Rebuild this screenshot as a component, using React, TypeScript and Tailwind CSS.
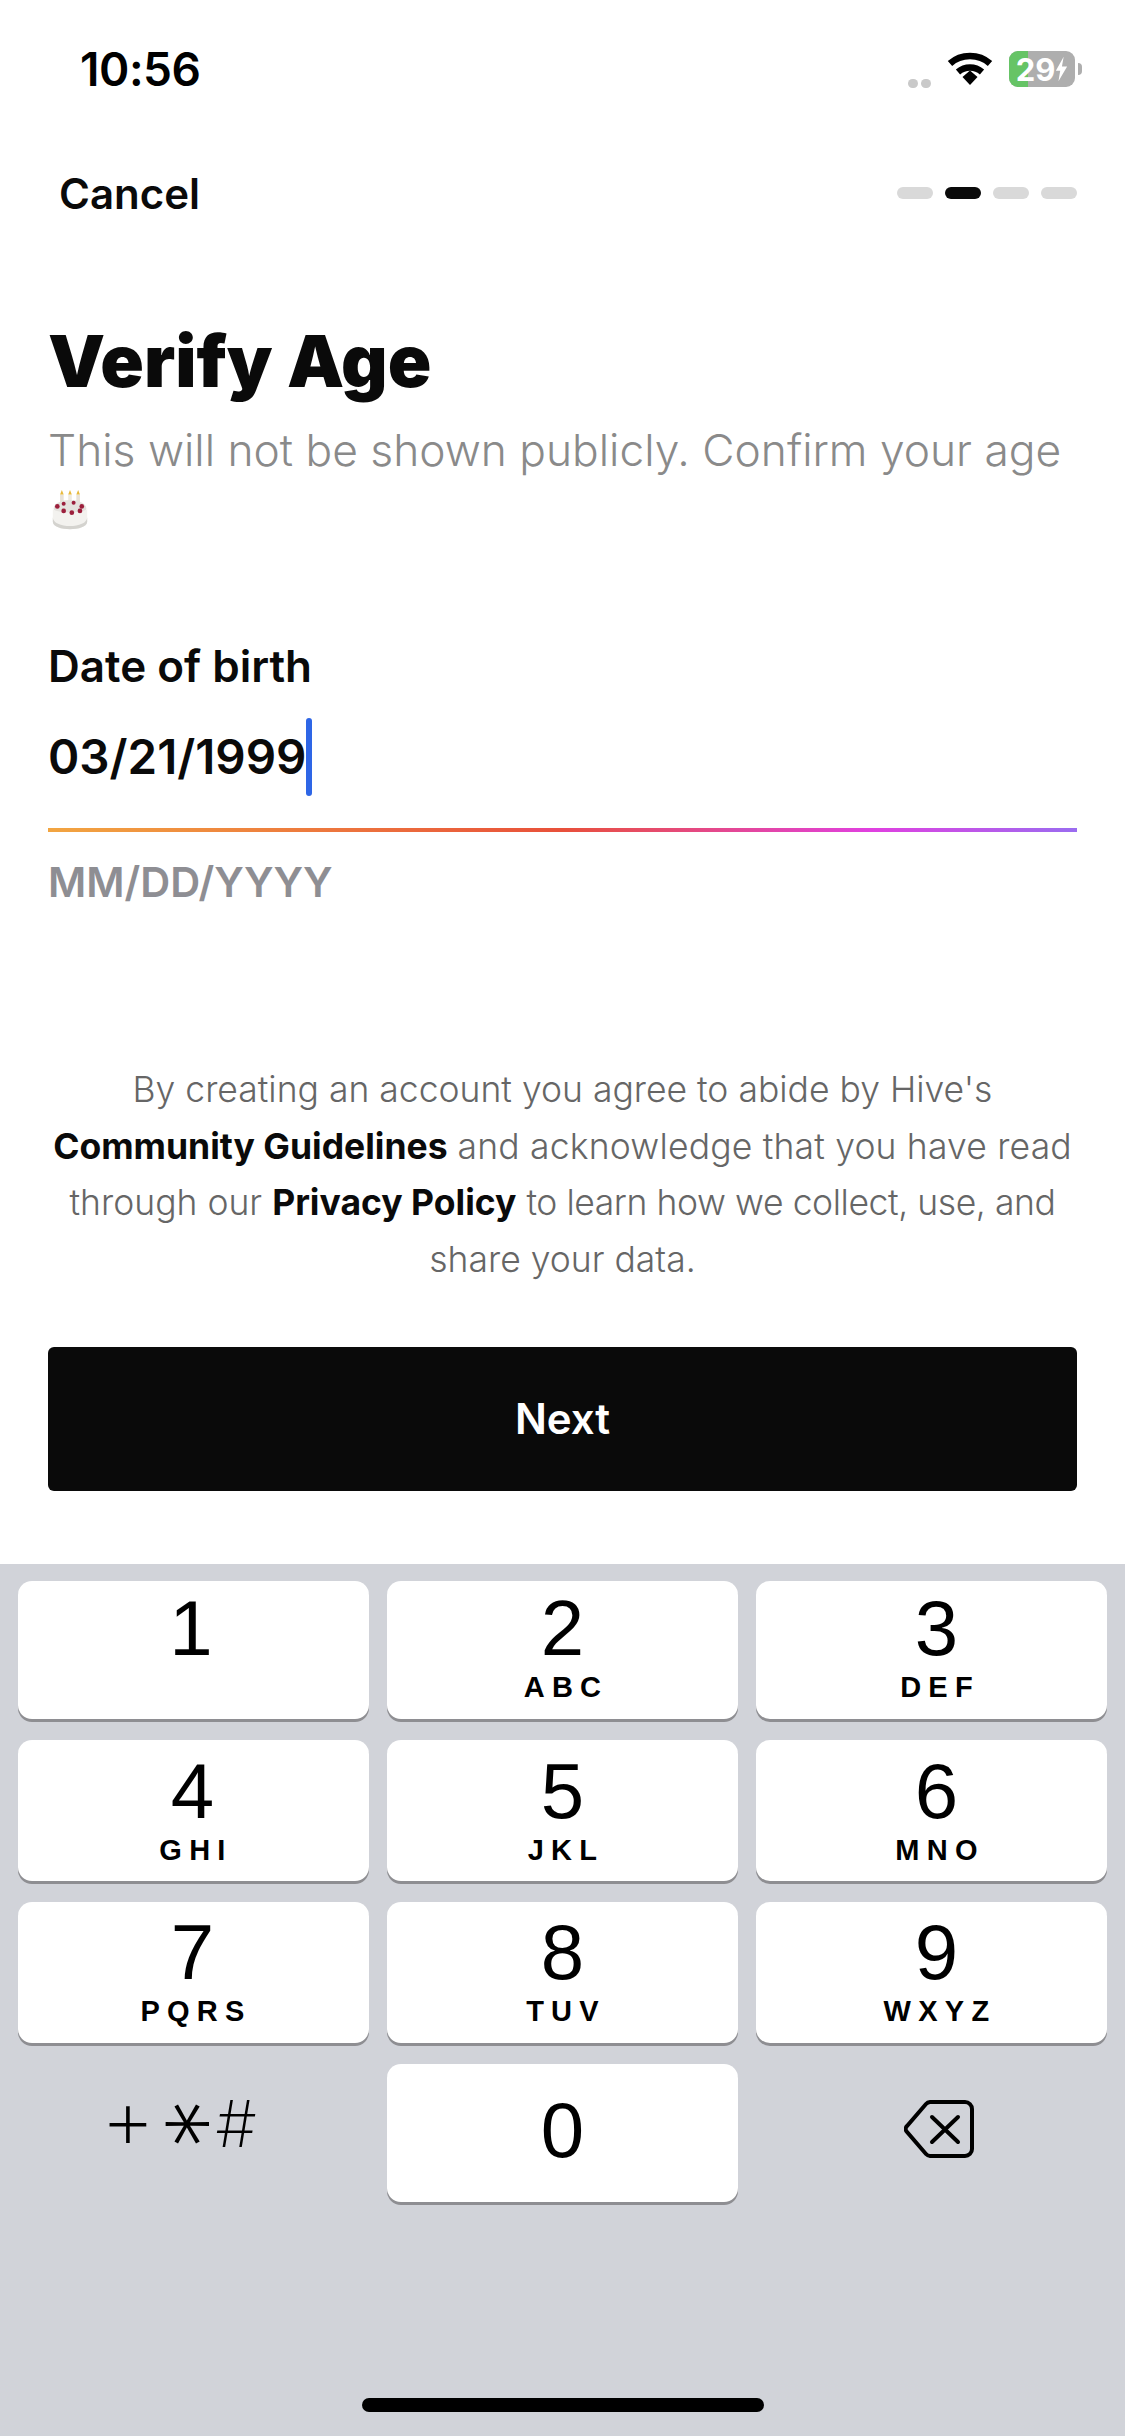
const rows = [
  {
    pad: 'pt-[7px]',
    keys: [
      { digit: '1', letters: '', shift: 'pr-[5px]' },
      { digit: '2', letters: 'ABC', shift: '' },
      { digit: '3', letters: 'DEF', shift: 'pl-[10px]' },
    ],
  },
  {
    pad: 'pt-[11px]',
    keys: [
      { digit: '4', letters: 'GHI', shift: 'pr-[2px]' },
      { digit: '5', letters: 'JKL', shift: '' },
      { digit: '6', letters: 'MNO', shift: 'pl-[10px]' },
    ],
  },
  {
    pad: 'pt-[10px]',
    keys: [
      { digit: '7', letters: 'PQRS', shift: 'pr-[2px]' },
      { digit: '8', letters: 'TUV', shift: '' },
      { digit: '9', letters: 'WXYZ', shift: 'pl-[10px]' },
    ],
  },
];

function Key({ digit, letters, className }: { digit: string; letters: string; className: string }) {
  return (
    <div className={`flex flex-col items-center rounded-[14px] bg-white shadow-[0_3px_0_#8e8e92] ${className}`}>
      <span className="text-[78px] leading-[80px] text-black">{digit}</span>
      <span className="mt-[4px] -mr-[7px] text-[29px] leading-[30px] font-bold tracking-[0.25em] text-black">
        {letters}
      </span>
    </div>
  );
}

function Wifi() {
  return (
    <svg width="46" height="34" viewBox="0 0 46 34" fill="none">
      <path d="M3 11.5C14 1.5 32 1.5 43 11.5" stroke="#000" strokeWidth="6.5" />
      <path d="M11 20C18 14 28 14 35 20" stroke="#000" strokeWidth="6.5" />
      <path d="M15.5 25L23 18.5 30.5 25 23 33Z" fill="#000" />
    </svg>
  );
}

function Cake() {
  return (
    <svg width="38" height="40" viewBox="0 0 42 44">
      <rect x="10" y="5" width="4" height="16" fill="#e8e2d8" />
      <rect x="19" y="5" width="4" height="18" fill="#efeae0" />
      <rect x="28" y="5" width="4" height="16" fill="#e8e2d8" />
      <path d="M12 0l2 5h-4zM21 0l2 5h-4zM30 0l2 5h-4z" fill="#e8b93c" />
      <ellipse cx="21" cy="20" rx="18" ry="9" fill="#e4e2de" />
      <path d="M2 20c0 6 38 6 38 0v15c0 11-38 11-38 0z" fill="#f3f2ef" />
      <path d="M2 30c0 13 38 13 38 0v5c0 11-38 11-38 0z" fill="#d4d3cf" />
      <g fill="#9c1f3c">
        <circle cx="7" cy="18" r="2.6" />
        <circle cx="14" cy="15" r="2.2" />
        <circle cx="25" cy="14" r="2.2" />
        <circle cx="34" cy="18" r="2.6" />
        <circle cx="14" cy="23" r="2.6" />
        <circle cx="23" cy="25" r="2.6" />
        <circle cx="32" cy="23" r="2.6" />
      </g>
    </svg>
  );
}

function Backspace() {
  return (
    <svg width="70" height="58" viewBox="0 0 70 58" fill="none" stroke="#000" strokeWidth="4" strokeLinecap="round">
      <path d="M26 2H61a7 7 0 0 1 7 7V49a7 7 0 0 1-7 7H26a6 6 0 0 1-4-2L3 32a4 4 0 0 1 0-6L22 4a6 6 0 0 1 4-2Z" />
      <path d="M28 17L54 42M54 17L28 42" />
    </svg>
  );
}

export default function App() {
  return (
    <div className="flex h-[2436px] w-[1125px] flex-col overflow-hidden bg-white font-['Inter',sans-serif] text-[#0a0a0a]">
      <div className="flex h-[138px] items-center justify-between pr-[43px] pl-[80px]">
        <span className="text-[46px] font-semibold tracking-[-0.01em] text-black">10:56</span>
        <div className="flex items-center">
          <div className="mt-[28px] mr-[16px] flex gap-[3px]">
            <span className="h-[9px] w-[10px] rounded-full bg-[#c9c9c9]" />
            <span className="h-[9px] w-[10px] rounded-full bg-[#c9c9c9]" />
          </div>
          <Wifi />
          <div className="relative ml-[16px] flex h-[36px] w-[66px] items-center justify-center rounded-[9px] bg-[#aeaeae]">
            <span className="absolute top-0 left-0 h-full w-[19px] rounded-l-[9px] bg-[#66c466]" />
            <span className="relative text-[31px] leading-none font-bold text-white">29</span>
            <svg className="relative" width="13" height="30" viewBox="0 0 15 30">
              <path d="M10 1L1 17h5l-2 12 10-17H8z" fill="#fff" />
            </svg>
          </div>
          <span className="ml-[3px] h-[12px] w-[4px] rounded-r-full bg-[#aeaeae]" />
        </div>
      </div>

      <div className="flex h-[110px] items-center justify-between pr-[48px] pl-[59px]">
        <span className="text-[42px] font-semibold">Cancel</span>
        <div className="flex gap-[12px]">
          <span className="h-[12px] w-[36px] rounded-full bg-[#d9d9d9]" />
          <span className="h-[12px] w-[36px] rounded-full bg-[#0a0a0a]" />
          <span className="h-[12px] w-[36px] rounded-full bg-[#d9d9d9]" />
          <span className="h-[12px] w-[36px] rounded-full bg-[#d9d9d9]" />
        </div>
      </div>

      <div className="px-[48px]">
        <h1 className="mt-[71px] text-[72px] leading-[84px] font-black">Verify Age</h1>
        <p className="mt-[17px] text-[44.3px] leading-[60px] font-light whitespace-nowrap text-[#8a8a8a]">
          This will not be shown publicly. Confirm your age
        </p>
        <div className="flex h-[60px] items-center pl-[3px]">
          <Cake />
        </div>

        <div className="mt-[101px] text-[44px] leading-[50px] font-semibold">Date of birth</div>
        <div className="mt-[27px] flex h-[78px] items-center">
          <span className="text-[47.5px] font-semibold">03/21/1999</span>
          <span className="h-[78px] w-[6px] rounded-full bg-[#2e66e6]" />
        </div>
        <div className="mt-[32px] h-[4px] bg-[linear-gradient(90deg,#f2a541,#e8503a_50%,#e040e0_80%,#9a6cf0)]" />
        <div className="mt-[25px] text-[41.5px] leading-[50px] font-semibold text-[#8e8e93]">MM/DD/YYYY</div>

        <p className="mt-[155px] text-center text-[35.5px] leading-[56.7px] font-light whitespace-nowrap text-[#666]">
          By creating an account you agree to abide by Hive's
          <br />
          <b className="font-bold text-[#0a0a0a]">Community Guidelines</b>{' '}
          <span className="tracking-[0.005em]">and acknowledge that you have read</span>
          <br />
          through our <b className="font-bold text-[#0a0a0a]">Privacy Policy</b>{' '}
          <span className="tracking-[-0.012em]">to learn how we collect, use, and</span>
          <br />
          share your data.
        </p>

        <div className="mt-[58px] flex h-[144px] items-center justify-center rounded-[6px] bg-[#0a0a0a] text-[42px] font-semibold text-white">
          Next
        </div>
      </div>

      <div className="relative mt-[73px] flex-1 bg-[#d1d3d9] px-[18px] pt-[17px] font-['Liberation_Sans',sans-serif]">
        <div className="grid grid-cols-3 grid-rows-[138px_141px_141px_138px] gap-x-[18px] gap-y-[21px]">
          {rows.map((row) =>
            row.keys.map((k) => (
              <Key key={k.digit} digit={k.digit} letters={k.letters} className={`${row.pad} ${k.shift}`} />
            )),
          )}
          <div className="flex items-center gap-[2px] pb-[30px] pl-[84px] font-['Inter',sans-serif] text-black">
            <span className="flex w-[52px] translate-y-[1px] justify-center text-[85px] leading-[90px] font-extralight">+</span>
            <span className="flex w-[52px] -translate-x-[11px] translate-y-[6px] rotate-90 justify-center text-[104px] leading-[52px] font-extralight">*</span>
            <span className="flex w-[52px] translate-y-[6px] justify-center text-[65px] leading-[90px] font-extralight">#</span>
          </div>
          <div className="flex items-center justify-center rounded-[14px] bg-white pb-[6px] shadow-[0_3px_0_#8e8e92]">
            <span className="text-[78px] leading-[80px] text-black">0</span>
          </div>
          <div className="flex items-center justify-center pb-[8px] pl-[14px]">
            <Backspace />
          </div>
        </div>
        <div className="absolute bottom-[24px] left-[362px] h-[14px] w-[402px] rounded-full bg-black" />
      </div>
    </div>
  );
}
